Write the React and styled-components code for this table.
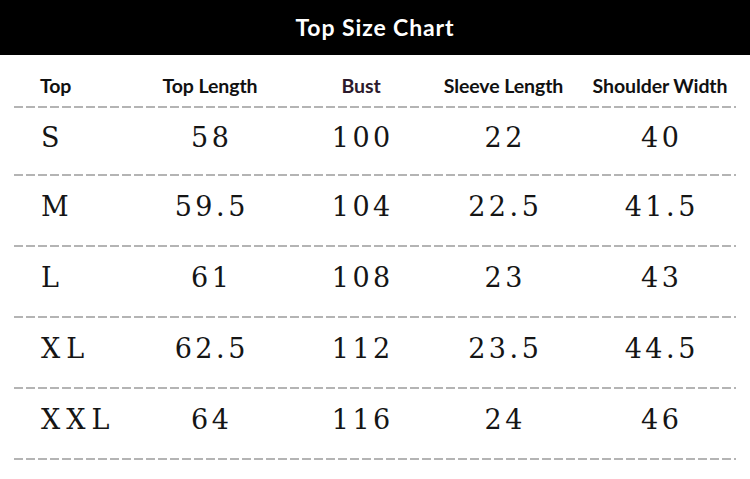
import React from "react";
import styled, { createGlobalStyle } from "styled-components";

const GlobalStyle = createGlobalStyle`
  html, body {
    margin: 0;
    padding: 0;
    background: #fff;
  }
  body {
    width: 750px;
    height: 479px;
    overflow: hidden;
  }
`;

const COLUMNS = "135px 150px 152px 133px 180px";

const Chart = styled.div`
  width: 750px;
  height: 479px;
  background: #fff;
  display: flex;
  flex-direction: column;
`;

const TitleBar = styled.div`
  height: 55px;
  background: #000;
  display: flex;
  align-items: center;
  justify-content: center;
  color: #fff;
  font-family: Lato, "Open Sans", sans-serif;
  font-weight: 700;
  font-size: 23px;
  letter-spacing: 0.9px;
  padding-bottom: 1px;
  box-sizing: border-box;
`;

const HeadRow = styled.div`
  display: grid;
  grid-template-columns: ${COLUMNS};
  align-items: center;
  padding-top: 10px;
  box-sizing: border-box;
  height: 51px;
`;

const HeadCell = styled.div`
  font-family: Lato, "Open Sans", sans-serif;
  font-weight: 700;
  font-size: 19.5px;
  letter-spacing: -0.1px;
  color: ${(p) => p.color || "#111"};
  text-align: ${(p) => (p.first ? "left" : "center")};
  padding-left: ${(p) => (p.first ? "40px" : "0")};
`;

const Divider = styled.div`
  height: 2px;
  margin: 0 14px;
  background-image: repeating-linear-gradient(
    to right,
    #b4b4b4 0,
    #b4b4b4 9px,
    transparent 9px,
    transparent 12px
  );
`;

const Row = styled.div`
  display: grid;
  grid-template-columns: ${COLUMNS};
  height: ${(p) => p.h}px;
  align-items: center;
  padding-bottom: 8px;
  box-sizing: border-box;
`;

const Cell = styled.div`
  font-family: "DejaVu Serif", "Liberation Serif", serif;
  font-size: 27px;
  color: #151515;
  letter-spacing: ${(p) => (p.first ? "6px" : "3.5px")};
  text-align: ${(p) => (p.first ? "left" : "center")};
  padding-left: ${(p) => (p.first ? "41px" : "3.5px")};
`;

const headers = ["Top", "Top Length", "Bust", "Sleeve Length", "Shoulder Width"];

const rows = [
  ["S", "58", "100", "22", "40"],
  ["M", "59.5", "104", "22.5", "41.5"],
  ["L", "61", "108", "23", "43"],
  ["XL", "62.5", "112", "23.5", "44.5"],
  ["XXL", "64", "116", "24", "46"],
];

export default function App() {
  return (
    <>
      <GlobalStyle />
      <Chart>
        <TitleBar>Top Size Chart</TitleBar>
        <HeadRow>
          {headers.map((h, i) => (
            <HeadCell key={h} first={i === 0} color={h === "Bust" ? "#2c1a2c" : undefined}>
              {h}
            </HeadCell>
          ))}
        </HeadRow>
        <Divider />
        {rows.map((r, ri) => (
          <React.Fragment key={r[0]}>
            <Row h={ri === 0 ? 66 : 69}>
              {r.map((v, i) => (
                <Cell key={i} first={i === 0}>
                  {v}
                </Cell>
              ))}
            </Row>
            <Divider />
          </React.Fragment>
        ))}
      </Chart>
    </>
  );
}
